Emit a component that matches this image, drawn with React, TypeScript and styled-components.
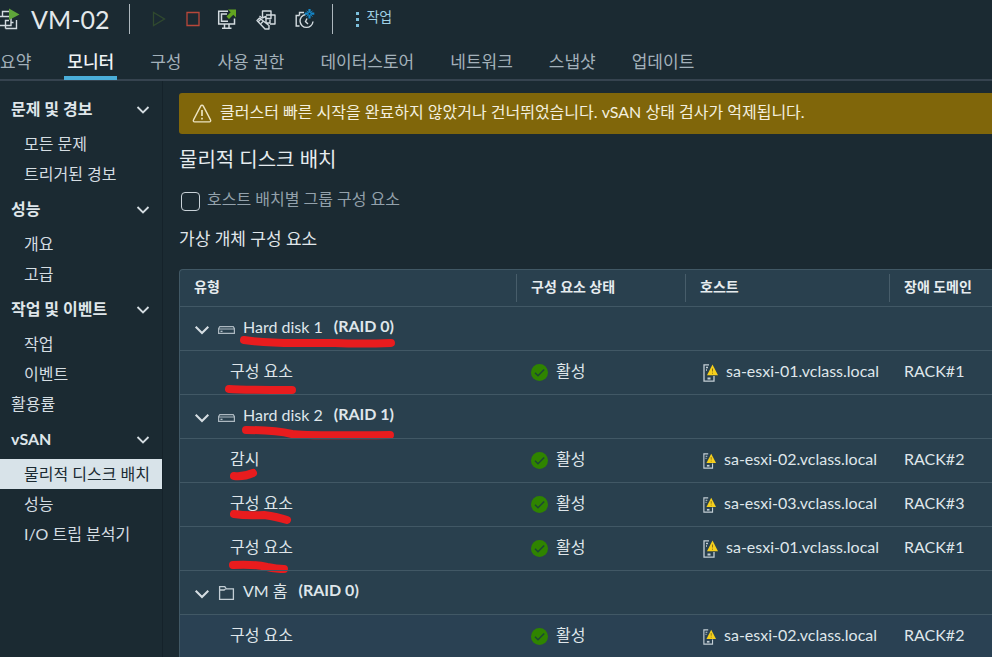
import React, { useState } from "react";
import styled, { createGlobalStyle, css } from "styled-components";

const font = `Lato, "Noto Sans CJK KR", sans-serif`;

const GlobalStyle = createGlobalStyle`
  * { box-sizing: border-box; }
  html, body { margin: 0; background: #1b2a32; }
  body { font: 400 16px/20px ${font}; color: #dfe6ea; overflow: hidden; }
  button { font: inherit; color: inherit; background: none; border: 0; padding: 0; cursor: pointer; }
  a { color: inherit; text-decoration: none; }
  svg { display: block; flex: none; }
`;

const Page = styled.div`
  min-height: 100vh;
  display: flex;
  flex-direction: column;
`;

/* ---------- header ---------- */

const Toolbar = styled.header`
  display: flex;
  align-items: center;
  height: 38px;
`;

const VmTitle = styled.h1`
  margin: 0 20px 0 11px;
  font-size: 25px;
  line-height: 30px;
  font-weight: 400;
  color: #e3e8eb;
`;

const Divider = styled.span`
  width: 1px;
  height: 30px;
  background: #aeb8be;
`;

const Actions = styled.div`
  display: flex;
  align-items: center;
  gap: 13px;
  margin: 0 17px 0 18px;
`;

const ActionGroup = styled.div<{ $gap: number }>`
  display: flex;
  gap: ${(p) => p.$gap}px;
`;

const ActionButton = styled.button`
  width: 21px;
  height: 24px;
  display: flex;
  align-items: center;
  justify-content: center;
`;

const MenuButton = styled.button`
  display: flex;
  align-items: center;
  gap: 7px;
  margin-left: 23px;
  font-size: 14px;
  color: #9fcfe4;
`;

const Tabs = styled.nav`
  display: flex;
  gap: 30px;
  height: 43px;
  margin-left: -3px;
  border-bottom: 2px solid #36434f;
`;

const Tab = styled.a<{ $active?: boolean }>`
  padding: 14px 3px 0;
  margin-bottom: -1px;
  font-size: 17px;
  line-height: 20px;
  white-space: nowrap;
  color: #a3b1ba;
  border-bottom: 4px solid transparent;
  ${(p) =>
    p.$active &&
    css`
      color: #f0f4f6;
      font-weight: 500;
      border-color: #4aaed9;
    `}
`;

/* ---------- sidebar ---------- */

const Body = styled.div`
  flex: 1;
  display: flex;
`;

const Sidebar = styled.nav`
  flex: 0 0 163px;
  padding-top: 8px;
  border-right: 1px solid #15222a;
`;

const GroupButton = styled.button`
  display: flex;
  align-items: center;
  justify-content: space-between;
  width: 100%;
  height: 40px;
  padding: 0 12px 0 11px;
  font-weight: 700;
  text-align: left;
`;

const SideLink = styled.a<{ $top?: boolean; $active?: boolean }>`
  display: flex;
  align-items: center;
  height: 30px;
  padding-left: ${(p) => (p.$top ? 11 : 24)}px;
  white-space: nowrap;
  color: ${(p) => (p.$active ? "#1b2a32" : "#d5dde2")};
  background: ${(p) => (p.$active ? "#d8e3e9" : "transparent")};
`;

/* ---------- content ---------- */

const Content = styled.main`
  flex: 1;
  min-width: 0;
  padding: 12px 0 0 16px;
`;

const Alert = styled.div`
  display: flex;
  align-items: center;
  gap: 8px;
  height: 41px;
  padding: 0 13px;
  border-radius: 3px 0 0 3px;
  background: #80660a;
  color: #f3efdf;
`;

/* Lifts a label slightly above the centre line of the icon beside it. */
const Label = styled.span`
  padding-bottom: 4px;
`;

const Title = styled.h2`
  margin: 12px 0 0;
  font-size: 20px;
  line-height: 26px;
  font-weight: 400;
  color: #e6ecef;
`;

const CheckLabel = styled.label`
  display: flex;
  align-items: center;
  gap: 7px;
  margin-top: 17px;
  padding-left: 2px;
  color: #93a1ab;
`;

const CheckBox = styled.input`
  appearance: none;
  width: 19px;
  height: 19px;
  margin: 0;
  border: 1px solid #c9d2d8;
  border-radius: 4px;
  &:checked { background: #4aaed9; }
`;

const SubTitle = styled.h3`
  margin: 15px 0 19px;
  font-size: 17px;
  line-height: 22px;
  font-weight: 400;
  color: #e0e7eb;
`;

const Grid = styled.table`
  width: 100%;
  table-layout: fixed;
  border-collapse: separate;
  border-spacing: 0;
  background: #29404e;
  border: 1px solid #415865;
  border-width: 1px 0 0 1px;
  border-radius: 4px 0 0 0;
`;

const Col = styled.col<{ $w?: number }>`
  ${(p) => p.$w && css`width: ${p.$w}px;`}
`;

const Th = styled.th`
  height: 36px;
  padding: 4px 0;
  text-align: left;
  font-size: 14px;
  font-weight: 700;
  color: #e6ecef;
`;

const ThLabel = styled.div`
  height: 28px;
  padding-left: 14px;
  line-height: 26px;
  white-space: nowrap;
  border-right: 1px solid #475d6a;
  ${Th}:last-child & { border-right: 0; }
`;

const Tr = styled.tr<{ $hover?: boolean }>`
  background: ${(p) => (p.$hover ? "#2a4153" : "transparent")};
`;

const Td = styled.td<{ $child?: boolean }>`
  position: relative;
  height: 44px;
  padding: 0 0 0 ${(p) => (p.$child ? 50 : 14)}px;
  border-top: 1px solid #415865;
  white-space: nowrap;
`;

const CellLine = styled.div<{ $inset?: boolean }>`
  display: flex;
  align-items: center;
  gap: 8px;
  padding-left: ${(p) => (p.$inset ? 3 : 0)}px;
`;

const Raid = styled.strong`
  margin-left: 3px;
  padding-bottom: 6px;
  font-weight: 700;
`;

const HostLink = styled.a`
  padding-bottom: 3px;
`;

const Marker = styled.svg`
  position: absolute;
  left: 0;
  top: 0;
  width: 100%;
  height: 100%;
  overflow: visible;
  pointer-events: none;
  fill: none;
  stroke: #e81c1e;
  stroke-width: 8;
  stroke-linecap: round;
  stroke-linejoin: round;
`;

/* ---------- icons ---------- */

const Chevron = ({ size = 14 }: { size?: number }) => (
  <svg width={size} height={size} viewBox="0 0 14 14" fill="none" stroke="#d5dde2" strokeWidth="1.8">
    <path d="M1.500 5 7 10.500l5.500-5.500" />
  </svg>
);

const VmIcon = () => (
  <svg width="20" height="22" viewBox="0 0 20 22" fill="none" stroke="#d3dbe0" strokeWidth="1.4">
    <path d="M-2 8.500H11V17.500H-2M2.500 8V3.500H9M5.500 20.500V12.500H9M5.500 20.500H16.500V12M11 14.500H13.500" />
    <path d="M9 .5v11.500l10.500-5.500z" fill="#5fa53a" stroke="none" />
  </svg>
);

const PlayIcon = () => (
  <svg width="16" height="18" viewBox="0 0 16 18" fill="none" stroke="#30492f" strokeWidth="1.3">
    <path d="M2.500 2.500v13l11-6.500z" />
  </svg>
);

const StopIcon = () => (
  <svg width="16" height="18" viewBox="0 0 16 18" fill="none" stroke="#b8473a" strokeWidth="1.3">
    <path d="M2 2.500h12v13H2z" />
  </svg>
);

const ConsoleIcon = () => (
  <svg width="20" height="22" viewBox="0 0 20 22" fill="none" stroke="#d3dbe0" strokeWidth="1.5">
    <path d="M11 3.200H1.700V16H17.500V10.500M10 6H4.500V13.200H11M7.500 16v3.500M12 16v3.500M5 20.300h9.500" />
    <path d="M11 1.500h8v8l-2.700-2.700-4.300 4.200-2.500-2.500 4.200-4.300z" fill="#62a420" stroke="none" />
  </svg>
);

const MigrateIcon = () => (
  <svg width="20" height="22" viewBox="0 0 20 22" fill="none" stroke="#d3dbe0" strokeWidth="1.4" strokeLinejoin="round">
    <path d="M6.500 9V3h8.500v4M10 7h9v9h-5M9.500 10.500H15V7" />
    <path d="M10 15V8.500L6 10 3.500 8" />
    <path d="M1 12.500 3.500 10 13 17.500v3.500h-4zM2.500 13.500l2-2M5 15.500l2-2M10 15h4v-3.500" />
  </svg>
);

const SnapshotIcon = () => (
  <svg width="20" height="22" viewBox="0 0 20 22" fill="none" stroke="#d3dbe0" strokeWidth="1.4">
    <path d="M4.500 18H1.200V7.500H4.500M4.500 7.500V4.500H9" />
    <path d="M10.500 6.500a6.500 6.500 0 1 0 7.500 7" />
    <path d="M12 10.500 10.500 13.500l2.500 2.500" />
    <path d="M14.500 1v9.500M9.700 5.700h9.600" stroke="#1487c9" strokeWidth="2.200" />
    <path d="M11.500 2.700l6 6M17.500 2.700l-6 6" stroke="#1487c9" strokeWidth="1" />
    <circle cx="14.500" cy="5.700" r="1" fill="#1b2a32" stroke="none" />
  </svg>
);

const DotsIcon = () => (
  <svg width="3" height="20" viewBox="0 0 3 20" fill="#7cc0dd">
    <path d="M0 3h3v3H0zM0 9h3v3H0zM0 15h3v3H0z" />
  </svg>
);

const WarnIcon = () => (
  <svg width="20" height="20" viewBox="0 0 20 20" fill="none" stroke="#ece3c0" strokeWidth="1.4" strokeLinejoin="round">
    <path d="M10 1.200c.5 0 .9.200 1.200.700l7.300 14c.5.900 0 2-1.100 2H2.600c-1.100 0-1.600-1.100-1.100-2l7.300-14c.3-.5.700-.7 1.200-.7z" />
    <path d="M10 6v6M10 13.700v1.700" strokeWidth="1.700" />
  </svg>
);

const DiskIcon = () => (
  <svg width="17" height="16" viewBox="0 0 17 16" fill="none" stroke="#c3ced5" strokeWidth="1.200">
    <path d="M.6 7.500 1.800 5.600h13.400L16.400 7.500v4.900H.6zM.6 8h15.800" opacity=".85" />
    <path d="M2.500 10.300h2" />
  </svg>
);

const FolderIcon = () => (
  <svg width="17" height="16" viewBox="0 0 17 16" fill="none" stroke="#c3ced5" strokeWidth="1.300">
    <path d="M1.600 14.400V1.700h5.200l1.500 2.200h7.100v10.500z" />
    <path d="M1.600 5h4.500l1.400-1.100" />
  </svg>
);

const OkIcon = () => (
  <svg width="17" height="17" viewBox="0 0 17 17">
    <circle cx="8.500" cy="8.500" r="8.500" fill="#2f8400" />
    <path d="m4 8.800 3 3 6.200-6.300" fill="none" stroke="#1d4734" strokeWidth="1.500" />
  </svg>
);

const HostIcon = ({ size }: { size: number }) => (
  <svg width={size + 1} height={size + 4} viewBox="0 0 15 18" fill="none" stroke="#c3ced5" strokeWidth="1.300">
    <path d="M6 .8H1v16.400h10V12M3 3.500h2M3 6h1" />
    <path d="M4.500 13.500h3v2h-3z" fill="#c3ced5" stroke="none" />
    <path d="M9.500.5 15 11.300H4z" fill="#f5cf1c" stroke="none" />
    <path d="M9.500 4.500v3M9.500 8.700v1" stroke="#8a7216" strokeWidth="1" />
  </svg>
);

/* ---------- data ---------- */

const tabs = ["요약", "모니터", "구성", "사용 권한", "데이터스토어", "네트워크", "스냅샷", "업데이트"];

type Side = { kind: "group" | "top" | "item"; text: string; active?: boolean };
const side: Side[] = [
  { kind: "group", text: "문제 및 경보" },
  { kind: "item", text: "모든 문제" },
  { kind: "item", text: "트리거된 경보" },
  { kind: "group", text: "성능" },
  { kind: "item", text: "개요" },
  { kind: "item", text: "고급" },
  { kind: "group", text: "작업 및 이벤트" },
  { kind: "item", text: "작업" },
  { kind: "item", text: "이벤트" },
  { kind: "top", text: "활용률" },
  { kind: "group", text: "vSAN" },
  { kind: "item", text: "물리적 디스크 배치", active: true },
  { kind: "item", text: "성능" },
  { kind: "item", text: "I/O 트립 분석기" },
];

type Row = { label: string; raid?: string; folder?: boolean; host?: string; rack?: string; mark?: string; hover?: boolean };
const rows: Row[] = [
  { label: "Hard disk 1", raid: "(RAID 0)", mark: "M64 33Q85 36 115 36L155 36Q180 37 211 36" },
  { label: "구성 요소", host: "sa-esxi-01", rack: "RACK#1", mark: "M49 38Q60 39 112 39" },
  { label: "Hard disk 2", raid: "(RAID 1)", mark: "M66 35Q95 35 112 39Q122 41 210 40" },
  { label: "감시", host: "sa-esxi-02", rack: "RACK#2", mark: "M54 37Q64 38 73 34" },
  { label: "구성 요소", host: "sa-esxi-03", rack: "RACK#3", mark: "M54 31Q66 33 84 32Q98 34 107 37" },
  { label: "구성 요소", host: "sa-esxi-01", rack: "RACK#1", mark: "M53 38Q75 37 87 40Q97 42 104 42" },
  { label: "VM 홈", raid: "(RAID 0)", folder: true },
  { label: "구성 요소", host: "sa-esxi-02", rack: "RACK#2", hover: true },
];

const GridRow = ({ row }: { row: Row }) => (
  <Tr $hover={row.hover}>
    <Td $child={!row.raid}>
      <CellLine>
        {row.raid && (
          <>
            <button aria-label={`${row.label} 접기`} aria-expanded="true">
              <Chevron size={16} />
            </button>
            {row.folder ? <FolderIcon /> : <DiskIcon />}
          </>
        )}
        <Label>{row.label}</Label>
        {row.raid && <Raid>{row.raid}</Raid>}
      </CellLine>
      {row.mark && (
        <Marker aria-hidden="true">
          <path d={row.mark} />
        </Marker>
      )}
    </Td>
    <Td>
      {row.host && (
        <CellLine>
          <OkIcon />
          <Label>활성</Label>
        </CellLine>
      )}
    </Td>
    <Td>
      {row.host && (
        <CellLine $inset>
          <HostIcon size={row.rack === "RACK#1" ? 14 : 12} />
          <HostLink href="#host">{row.host}.vclass.local</HostLink>
        </CellLine>
      )}
    </Td>
    <Td>
      <CellLine>
        <Label>{row.rack}</Label>
      </CellLine>
    </Td>
  </Tr>
);

export default function App() {
  const [grouped, setGrouped] = useState(false);
  return (
    <Page lang="ko">
      <GlobalStyle />
      <Toolbar>
        <VmIcon />
        <VmTitle>VM-02</VmTitle>
        <Divider />
        <Actions>
          <ActionGroup $gap={13}>
            <ActionButton aria-label="전원 켜기"><PlayIcon /></ActionButton>
            <ActionButton aria-label="전원 끄기"><StopIcon /></ActionButton>
          </ActionGroup>
          <ActionGroup $gap={18}>
            <ActionButton aria-label="콘솔 시작"><ConsoleIcon /></ActionButton>
            <ActionButton aria-label="마이그레이션"><MigrateIcon /></ActionButton>
            <ActionButton aria-label="스냅샷 생성"><SnapshotIcon /></ActionButton>
          </ActionGroup>
        </Actions>
        <Divider />
        <MenuButton>
          <DotsIcon />
          <Label>작업</Label>
        </MenuButton>
      </Toolbar>
      <Tabs>
        {tabs.map((t) => (
          <Tab key={t} href="#tab" $active={t === "모니터"}>{t}</Tab>
        ))}
      </Tabs>
      <Body>
        <Sidebar>
          {side.map((s, i) =>
            s.kind === "group" ? (
              <GroupButton key={i} aria-expanded="true">
                {s.text}
                <Chevron />
              </GroupButton>
            ) : (
              <SideLink key={i} href="#view" $top={s.kind === "top"} $active={s.active}>
                {s.text}
              </SideLink>
            )
          )}
        </Sidebar>
        <Content>
          <Alert role="alert">
            <WarnIcon />
            <Label>클러스터 빠른 시작을 완료하지 않았거나 건너뛰었습니다. vSAN 상태 검사가 억제됩니다.</Label>
          </Alert>
          <Title>물리적 디스크 배치</Title>
          <CheckLabel>
            <CheckBox type="checkbox" checked={grouped} onChange={(e) => setGrouped(e.target.checked)} />
            <Label>호스트 배치별 그룹 구성 요소</Label>
          </CheckLabel>
          <SubTitle>가상 개체 구성 요소</SubTitle>
          <Grid>
            <colgroup>
              <Col $w={337} />
              <Col $w={169} />
              <Col $w={204} />
              <Col />
            </colgroup>
            <thead>
              <tr>
                {["유형", "구성 요소 상태", "호스트", "장애 도메인"].map((h) => (
                  <Th key={h} scope="col"><ThLabel>{h}</ThLabel></Th>
                ))}
              </tr>
            </thead>
            <tbody>
              {rows.map((r, i) => <GridRow key={i} row={r} />)}
            </tbody>
          </Grid>
        </Content>
      </Body>
    </Page>
  );
}
